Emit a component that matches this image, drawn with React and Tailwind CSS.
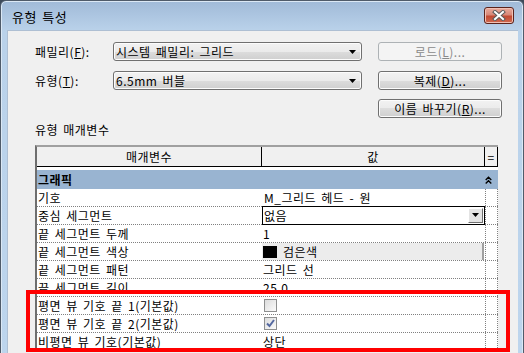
import clsx from 'clsx'

function Arrow() {
  return (
    <svg width="7" height="4" viewBox="0 0 7 4" className="shrink-0">
      <path d="M0 0 H7 L3.5 4 Z" fill="#000" />
    </svg>
  )
}

function Btn({ children, disabled }) {
  return (
    <div
      className={clsx(
        'w-[124px] h-[19px] rounded-[3px] border flex items-center justify-center leading-none',
        disabled
          ? 'border-[#adb2b5] bg-[#f4f4f4] text-[#8a8a8a]'
          : 'border-[#707070] bg-[linear-gradient(180deg,#f2f2f2_0%,#ebebeb_50%,#dddddd_50%,#cfcfcf_100%)] shadow-[inset_0_0_0_1px_#fcfcfc] text-black'
      )}
    >
      {children}
    </div>
  )
}

function Combo({ children }) {
  return (
    <div className="w-[249px] h-[19px] rounded-[3px] border border-[#707070] bg-[linear-gradient(180deg,#f2f2f2_0%,#ebebeb_50%,#dddddd_50%,#cfcfcf_100%)] shadow-[inset_0_0_0_1px_#fcfcfc] flex items-center justify-between pl-[2px] pr-[5px] leading-none">
      <span>{children}</span>
      <Arrow />
    </div>
  )
}

function Row({ name, children }) {
  return (
    <div className="flex h-[18px] border-b border-dotted border-[#808080]">
      <div className="w-[225px] pl-[1px] leading-[17px] whitespace-nowrap">{name}</div>
      <div className="w-[223px] leading-[17px] whitespace-nowrap flex items-center">{children}</div>
      <div className="w-[13px] border-l border-r border-dotted border-[#808080]" />
    </div>
  )
}

function Check({ checked }) {
  return (
    <div className="ml-[2px] w-[13px] h-[13px] border border-[#8e8f8f] bg-[linear-gradient(135deg,#dcdcdc,#fbfbfb)] flex items-center justify-center">
      {checked && (
        <svg width="11" height="11" viewBox="0 0 11 11">
          <path d="M2 5.5 L4.5 8 L9 2" stroke="#5468a0" strokeWidth="2" fill="none" />
        </svg>
      )}
    </div>
  )
}

export default function App() {
  return (
    <div className="w-[524px] h-[353px] overflow-hidden relative bg-[#3d4a5a] text-[12px] tracking-[0.5px] [word-spacing:2px] text-black font-['Noto_Sans_CJK_KR','Noto_Sans',sans-serif]">
      <div className="h-[360px] flex flex-col rounded-t-[6px] border border-[#4f5b6a] bg-[linear-gradient(180deg,#a0bad8_0px,#bad2ea_30px,#bdd5ed_100%)] shadow-[inset_0_0_0_1px_#dbe8f5]">
        {/* title bar */}
        <div className="h-[29px] flex items-center justify-between pl-[11px] pr-[9px]">
          <span className="text-[13px] leading-none mt-[2px]">유형 특성</span>
          <div className="w-[30px] h-[17px] mb-[1px] rounded-[3px] border border-[#5b231b] bg-[linear-gradient(180deg,#e9ab9c_0%,#d88878_45%,#c24a33_55%,#cf6a50_100%)] shadow-[inset_0_0_0_1px_#f0c0b4] flex items-center justify-center">
            <svg width="14" height="11" viewBox="0 0 14 11">
              <path d="M3 2 L11 9 M11 2 L3 9" stroke="#5a5a5a" strokeWidth="4" strokeLinecap="square" />
              <path d="M3 2 L11 9 M11 2 L3 9" stroke="#fff" strokeWidth="2" strokeLinecap="square" />
            </svg>
          </div>
        </div>

        {/* client */}
        <div className="flex-1 ml-[6px] mr-[5px] bg-[#f0f0f0] border-t border-l border-[#aebfd3] pl-[27px] pt-[11px]">
          <div className="flex items-center h-[19px]">
            <div className="w-[78px]">패밀리(<u>F</u>):</div>
            <Combo>시스템 패밀리: 그리드</Combo>
            <div className="ml-[16px]">
              <Btn disabled>로드(<u>L</u>)...</Btn>
            </div>
          </div>
          <div className="flex items-center h-[19px] mt-[10px]">
            <div className="w-[78px]">유형(<u>T</u>):</div>
            <Combo>6.5mm 버블</Combo>
            <div className="ml-[16px]">
              <Btn>복제(<u>D</u>)...</Btn>
            </div>
          </div>
          <div className="flex h-[19px] mt-[9px] pl-[343px]">
            <Btn>이름 바꾸기(<u>R</u>)...</Btn>
          </div>
          <div className="mt-[5px] h-[14px] leading-[14px]">유형 매개변수</div>

          {/* table */}
          <div className="mt-[8px] w-[463px] border-l-2 border-t-2 border-l-[#6e6e6e] border-t-[#a0a0a0] bg-white">
            <div className="flex h-[20px] bg-[#f0f0f0] border-b border-black leading-[19px]">
              <div className="w-[225px] border-r border-black text-center">매개변수</div>
              <div className="w-[223px] border-r border-black text-center">값</div>
              <div className="w-[13px] border-r border-black text-center">=</div>
            </div>
            <div className="h-[3px]" />
            <div className="flex items-center justify-between h-[19px] bg-[#99b4d1] pl-[1px] pr-[6px]">
              <span className="font-semibold leading-none">그래픽</span>
              <svg width="7" height="8" viewBox="0 0 7 8">
                <path d="M0.7 4 L3.5 1.2 L6.3 4 M0.7 7.5 L3.5 4.7 L6.3 7.5" stroke="#000" strokeWidth="1.4" fill="none" />
              </svg>
            </div>
            <Row name="기호"><span className="pl-[2px]">M_그리드 헤드 - 원</span></Row>
            <Row name="중심 세그먼트">
              <div className="w-[223px] h-[19px] -mt-px border border-black bg-white flex items-center justify-between">
                <span className="pl-[1px]">없음</span>
                <div className="w-[15px] h-[15px] mr-px bg-[#e4e4e4] border border-t-white border-l-white border-r-[#707070] border-b-[#707070] flex items-center justify-center">
                  <Arrow />
                </div>
              </div>
            </Row>
            <Row name="끝 세그먼트 두께"><span className="pl-[1px]">1</span></Row>
            <Row name="끝 세그먼트 색상">
              <div className="w-[222px] h-[17px] bg-[#ececec] border-r-2 border-[#a0a0a0] flex items-center gap-[6px]">
                <div className="ml-[1px] w-[14px] h-[12px] bg-black" />
                <span>검은색</span>
              </div>
            </Row>
            <Row name="끝 세그먼트 패턴"><span className="pl-[1px]">그리드 선</span></Row>
            <Row name="끝 세그먼트 길이"><span className="pl-[1px]">25.0</span></Row>
            <Row name="평면 뷰 기호 끝 1(기본값)"><Check /></Row>
            <Row name="평면 뷰 기호 끝 2(기본값)"><Check checked /></Row>
            <Row name="비평면 뷰 기호(기본값)"><span className="pl-[1px]">상단</span></Row>
          </div>
        </div>
      </div>

      <div className="absolute left-[26px] top-[290px] w-[484px] h-[62px] border-4 border-[#ff0000]" />
    </div>
  )
}
